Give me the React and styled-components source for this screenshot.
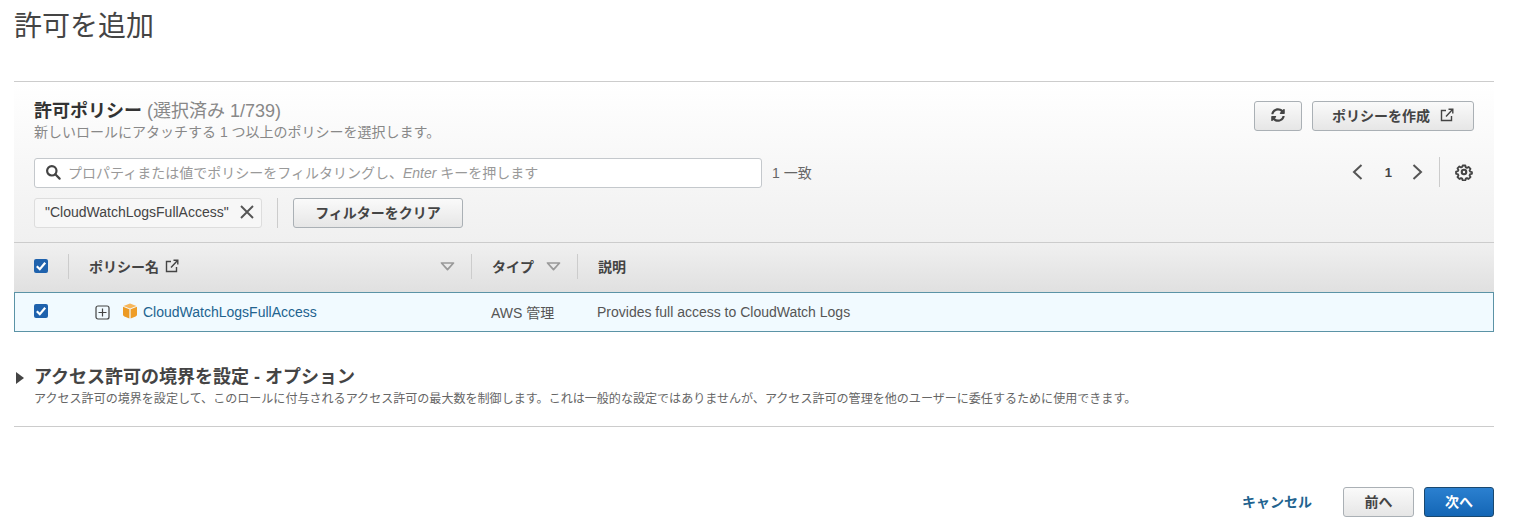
import React from 'react'
import styled, { createGlobalStyle } from 'styled-components'
import { FaSyncAlt } from 'react-icons/fa'

const GlobalStyle = createGlobalStyle`
    html, body {
        margin: 0;
        padding: 0;
        background: #fff;
    }
    body {
        font-family: "Liberation Sans", "Noto Sans CJK JP", sans-serif;
        color: #444;
        overflow: hidden;
    }
`

function ExternalIcon({ size = 13 }) {
    return (
        <svg width={size} height={size} viewBox="0 0 14 14" fill="none" stroke="#444" strokeWidth="1.4">
            <path d="M6 2.5H1.5v10h10V8" />
            <path d="M6 8.5 12.5 1.5M8.5 1.2h4.3v4.3" />
        </svg>
    )
}

function SearchIcon() {
    return (
        <svg width="16" height="16" viewBox="0 0 16 16" fill="none" stroke="#444" strokeWidth="2.2">
            <circle cx="6.8" cy="6.8" r="4.7" />
            <path d="M10.3 10.3 14.6 14.6" strokeLinecap="round" />
        </svg>
    )
}

function CloseIcon() {
    return (
        <svg width="14" height="14" viewBox="0 0 14 14" fill="none" stroke="#555" strokeWidth="1.9">
            <path d="M1 1 13 13M13 1 1 13" />
        </svg>
    )
}

function ChevronIcon({ dir }) {
    return (
        <svg width="11" height="16" viewBox="0 0 11 16" fill="none" stroke="#555" strokeWidth="2">
            <path d={dir === 'left' ? 'M9.5 1 2 8l7.5 7' : 'M1.5 1 9 8l-7.5 7'} />
        </svg>
    )
}

function GearIcon() {
    return (
        <svg width="18" height="18" viewBox="0 0 16 16" fill="none" stroke="#444" strokeWidth="1.9">
            <circle cx="8" cy="8" r="2" />
            <path d="M6.6 1.2h2.8l.4 1.9 1.3.6 1.7-1 2 2-1 1.7.6 1.3 1.9.4v1.8l-1.9.4-.6 1.3 1 1.7-2 2-1.7-1-1.3.6-.4 1.9H6.6l-.4-1.9-1.3-.6-1.7 1-2-2 1-1.7-.6-1.3-1.9-.4V7.6l1.9-.4.6-1.3-1-1.7 2-2 1.7 1 1.3-.6z" transform="translate(1.2 1.2) scale(.85)" strokeLinejoin="round" />
        </svg>
    )
}

function SortIcon() {
    return (
        <svg width="15" height="9" viewBox="0 0 15 9" fill="none" stroke="#999" strokeWidth="1.7">
            <path d="M1.5 1h12L7.5 7.6z" strokeLinejoin="round" />
        </svg>
    )
}

function PlusBoxIcon() {
    return (
        <svg width="15" height="15" viewBox="0 0 15 15" fill="none" stroke="#444" strokeWidth="1.2">
            <rect x="1" y="1" width="13" height="13" rx="2" />
            <path d="M7.5 3.5v8M3.5 7.5h8" />
        </svg>
    )
}

function PackageIcon() {
    return (
        <PackageSvg width="16" height="16" viewBox="0 0 16 16">
            <path d="M8 .5 14.5 3 8 5.4 1.5 3z" fill="#f7b65a" />
            <path d="M1 3.8 7.4 6.2V15.5L2.4 13.5C1.5 13.1 1 12.5 1 11.6z" fill="#ec9a24" />
            <path d="M15 3.8 8.6 6.2V15.5l5-2c.9-.4 1.4-1 1.4-1.9z" fill="#ef9d27" />
        </PackageSvg>
    )
}

function Check() {
    return (
        <CheckBox>
            <svg width="14" height="14" viewBox="0 0 14 14" fill="none" stroke="#fff" strokeWidth="2.2">
                <path d="M2.8 7.2 5.8 10.2 11.2 3.8" />
            </svg>
        </CheckBox>
    )
}

function App() {
    return (
        <Page>
            <GlobalStyle />
            <Title>許可を追加</Title>
            <Panel>
                <PanelHeader>
                    <TopRow>
                        <div>
                            <PanelTitle>許可ポリシー <small>(選択済み 1/739)</small></PanelTitle>
                            <PanelSub>新しいロールにアタッチする 1 つ以上のポリシーを選択します。</PanelSub>
                        </div>
                        <Actions>
                            <Button $width={48}><FaSyncAlt size={14} color="#444" /></Button>
                            <Button $width={162}>ポリシーを作成<ExternalIcon size={14} /></Button>
                        </Actions>
                    </TopRow>
                    <FilterRow>
                        <SearchBox>
                            <SearchIcon />
                            <span>プロパティまたは値でポリシーをフィルタリングし、<em>Enter</em> キーを押します</span>
                        </SearchBox>
                        <MatchCount>1 一致</MatchCount>
                        <Pager>
                            <ChevronIcon dir="left" />
                            <b>1</b>
                            <ChevronIcon dir="right" />
                            <PagerDivider />
                            <GearIcon />
                        </Pager>
                    </FilterRow>
                    <ChipRow>
                        <Chip>"CloudWatchLogsFullAccess"<CloseIcon /></Chip>
                        <ChipDivider />
                        <Button $width={170}>フィルターをクリア</Button>
                    </ChipRow>
                </PanelHeader>
                <TableHead>
                    <CheckCell><Check /></CheckCell>
                    <HeadCell $width={403}>
                        <span>ポリシー名</span>
                        <ExternalIcon size={14} />
                        <SortSlot><SortIcon /></SortSlot>
                    </HeadCell>
                    <HeadCell $width={106}>
                        <span>タイプ</span>
                        <SortSlot><SortIcon /></SortSlot>
                    </HeadCell>
                    <HeadCell>説明</HeadCell>
                </TableHead>
                <TableRow>
                    <CheckCell><Check /></CheckCell>
                    <NameCell>
                        <PlusBoxIcon />
                        <PackageIcon />
                        <PolicyLink>CloudWatchLogsFullAccess</PolicyLink>
                    </NameCell>
                    <TypeCell>AWS 管理</TypeCell>
                    <DescCell>Provides full access to CloudWatch Logs</DescCell>
                </TableRow>
            </Panel>
            <Section>
                <SectionTitle><Arrow />アクセス許可の境界を設定 - オプション</SectionTitle>
                <SectionSub>アクセス許可の境界を設定して、このロールに付与されるアクセス許可の最大数を制御します。これは一般的な設定ではありませんが、アクセス許可の管理を他のユーザーに委任するために使用できます。</SectionSub>
            </Section>
            <Footer>
                <CancelLink>キャンセル</CancelLink>
                <Button $width={71}>前へ</Button>
                <PrimaryButton>次へ</PrimaryButton>
            </Footer>
        </Page>
    )
}

const Page = styled.div`
    width: 1480px;
    padding-left: 14px;
`

const Title = styled.h1`
    margin: 0;
    height: 81px;
    font-size: 28px;
    line-height: 53px;
    font-weight: 400;
    color: #444;
`

const Panel = styled.section`
    border-top: 1px solid #ccc;
`

const PanelHeader = styled.div`
    height: 160px;
    box-sizing: border-box;
    padding: 18px 20px 0;
    background: linear-gradient(#fff, #f0f0f0);
`

const TopRow = styled.div`
    display: flex;
    justify-content: space-between;
    height: 58px;
`

const PanelTitle = styled.div`
    font-size: 18px;
    line-height: 22px;
    font-weight: 700;
    color: #333;
    small {
        font-size: 18px;
        font-weight: 400;
        color: #888;
    }
`

const PanelSub = styled.div`
    font-size: 14px;
    line-height: 20px;
    color: #888;
`

const Actions = styled.div`
    display: flex;
    gap: 10px;
    align-items: flex-start;
    margin-top: 1px;
`

const Button = styled.button`
    width: ${p => p.$width}px;
    height: 30px;
    box-sizing: border-box;
    display: inline-flex;
    align-items: center;
    justify-content: center;
    gap: 10px;
    padding: 0 0 2px;
    font: 700 14px "Liberation Sans", "Noto Sans CJK JP", sans-serif;
    color: #444;
    border: 1px solid #aab0b5;
    border-radius: 3px;
    background: linear-gradient(#fafafa, #e6e6e6);
`

const PrimaryButton = styled(Button)`
    width: 70px;
    color: #fff;
    border-color: #19486f;
    background: linear-gradient(#2b80d0, #1466b5);
`

const FilterRow = styled.div`
    display: flex;
    align-items: center;
    height: 30px;
`

const SearchBox = styled.div`
    width: 728px;
    height: 30px;
    box-sizing: border-box;
    display: flex;
    align-items: center;
    gap: 7px;
    padding: 0 0 3px 10px;
    font-size: 14px;
    color: #999;
    background: #fff;
    border: 1px solid #c4c8cc;
    border-radius: 3px;
    em {
        font-style: italic;
    }
`

const MatchCount = styled.span`
    margin: 0 0 3px 10px;
    font-size: 14px;
    color: #666;
`

const Pager = styled.div`
    margin-left: auto;
    display: flex;
    align-items: center;
    padding: 0 1px 2px 0;
    font-size: 13px;
    color: #444;
    b {
        margin: 0 20px 0 22px;
    }
`

const PagerDivider = styled.i`
    width: 1px;
    height: 30px;
    margin: 0 15px 0 16px;
    background: #ccc;
`

const ChipRow = styled.div`
    display: flex;
    align-items: center;
    margin-top: 10px;
    height: 30px;
`

const Chip = styled.div`
    width: 228px;
    height: 30px;
    box-sizing: border-box;
    display: flex;
    align-items: center;
    justify-content: space-between;
    padding: 0 7px 2px 10px;
    font-size: 14px;
    color: #444;
    background: #f7f7f7;
    border: 1px solid #ddd;
    border-radius: 3px;
`

const ChipDivider = styled.i`
    width: 1px;
    height: 30px;
    margin: 0 15px;
    background: #ccc;
`

const TableHead = styled.div`
    display: flex;
    align-items: center;
    height: 47px;
    padding-bottom: 2px;
    border-top: 1px solid #ccc;
    background: linear-gradient(#f0f0f0, #e0e0e0);
`

const CheckCell = styled.div`
    width: 54px;
    flex: none;
    display: flex;
    box-sizing: border-box;
    padding-left: 20px;
`

const CheckBox = styled.span`
    width: 14px;
    height: 14px;
    display: block;
    margin-bottom: 2px;
    border-radius: 2px;
    background: #1f62ad;
`

const HeadCell = styled.div`
    ${p => p.$width && `width: ${p.$width}px;`}
    height: 25px;
    flex: none;
    box-sizing: border-box;
    display: flex;
    align-items: center;
    gap: 6px;
    padding: 0 16px 1px 20px;
    font-size: 14px;
    font-weight: 700;
    color: #444;
    border-left: 1px solid #ccc;
`

const SortSlot = styled.span`
    margin-left: auto;
    display: flex;
`

const TableRow = styled.div`
    display: flex;
    align-items: center;
    height: 40px;
    box-sizing: border-box;
    font-size: 14px;
    color: #555;
    background: #f1faff;
    border: 1px solid #5b93a6;
    & > ${CheckCell} {
        padding-left: 19px;
    }
`

const NameCell = styled.div`
    width: 403px;
    flex: none;
    display: flex;
    align-items: center;
    gap: 5px;
    padding-left: 26px;
    box-sizing: border-box;
    svg:first-child {
        margin-right: 7px;
    }
`

const PackageSvg = styled.svg`
    margin-bottom: 3px;
`

const PolicyLink = styled.a`
    color: #22638f;
`

const TypeCell = styled.div`
    width: 106px;
    padding-left: 19px;
    box-sizing: border-box;
    flex: none;
`

const DescCell = styled.div`
    padding-left: 19px;
`

const Section = styled.section`
    margin-top: 34px;
    height: 60px;
    border-bottom: 1px solid #ccc;
`

const SectionTitle = styled.h2`
    margin: 0;
    display: flex;
    align-items: center;
    font-size: 18px;
    line-height: 23px;
    font-weight: 700;
    color: #444;
`

const Arrow = styled.i`
    width: 0;
    height: 0;
    margin: 0 10px 0 2px;
    border-left: 8px solid #444;
    border-top: 6.5px solid transparent;
    border-bottom: 6.5px solid transparent;
`

const SectionSub = styled.p`
    margin: 0;
    padding-left: 20px;
    font-size: 12.06px;
    line-height: 20px;
    color: #666;
`

const Footer = styled.div`
    display: flex;
    justify-content: flex-end;
    align-items: center;
    gap: 10px;
    margin-top: 60px;
`

const CancelLink = styled.a`
    margin: 0 21px 2px 0;
    font-size: 14px;
    font-weight: 700;
    color: #22638f;
`

export default App
